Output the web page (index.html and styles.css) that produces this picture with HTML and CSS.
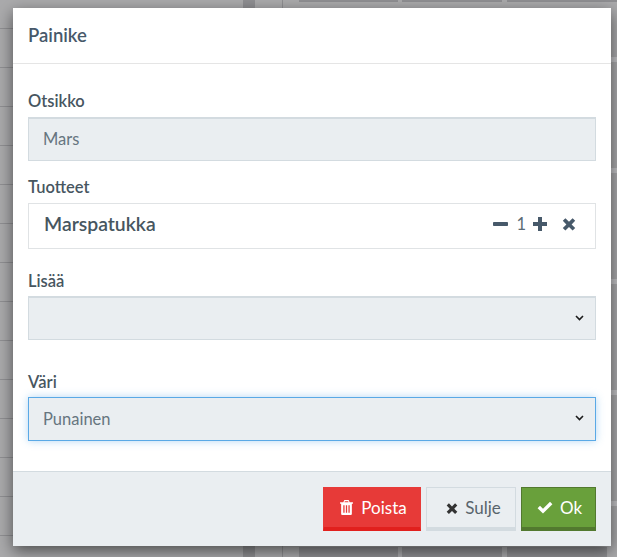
FILE: index.html
```html
<!DOCTYPE html>
<html lang="en">

<head>
    <meta charset="UTF-8">
    <meta name="viewport" content="width=device-width, initial-scale=1.0">
    <title>Painike</title>
    <link rel="stylesheet" href="styles.css">
</head>

<body>
    <div class="modal">
        <div class="modal-header">
            <h4>Painike</h4>
        </div>
        <div class="modal-body">
            <div class="field field-title">
                <label>Otsikko</label>
                <div class="control">Mars</div>
            </div>
            <div class="field field-products">
                <label>Tuotteet</label>
                <div class="product">
                    <span class="product-name">Marspatukka</span>
                    <span class="product-tools">
                        <svg class="ico ico-minus" viewBox="0 0 15 14"><rect x="0" y="5" width="15" height="4" rx="0.8"/></svg>
                        <span class="qty">1</span>
                        <svg class="ico ico-plus" viewBox="0 0 14 14"><path d="M5 0h4v5h5v4H9v5H5V9H0V5h5z"/></svg>
                        <svg class="ico ico-times" viewBox="0 0 14 14"><path d="M3.4 1.2 7 4.8l3.6-3.6 2.6 2.6L9.6 7.4l3.6 3.6-2.6 2.6L7 10l-3.6 3.6L.8 11l3.6-3.6L.8 3.8z"/></svg>
                    </span>
                </div>
            </div>
            <div class="field field-add">
                <label>Lisää</label>
                <div class="control select">
                    <span></span>
                    <svg class="chev" viewBox="0 0 9 6"><path d="M1 1l3.5 3.5L8 1" fill="none" stroke="#1c1c1c" stroke-width="1.6"/></svg>
                </div>
            </div>
            <div class="field field-color">
                <label>Väri</label>
                <div class="control select focus">
                    <span class="value">Punainen</span>
                    <svg class="chev" viewBox="0 0 9 6"><path d="M1 1l3.5 3.5L8 1" fill="none" stroke="#1c1c1c" stroke-width="1.6"/></svg>
                </div>
            </div>
        </div>
        <div class="modal-footer">
            <button class="btn btn-red">
                <svg class="ico-trash" viewBox="0 0 12 14"><path fill-rule="evenodd" d="M4 0h4l1 2h3v1.4H11V13a1 1 0 0 1-1 1H2a1 1 0 0 1-1-1V3.4H0V2h3zM4.5 1.2 4.1 2h3.8l-.4-.8zM3 5v7h1.2V5zm2.4 0v7h1.2V5zm2.4 0v7H9V5z"/></svg>
                Poista
            </button>
            <button class="btn btn-light">
                <svg class="ico-btn" viewBox="0 0 14 14"><path d="M3.4 1.6 7 5.2l3.6-3.6 2.6 2.6L9.6 7.8l3.6 3.6-2.6 2.6L7 10.4 3.4 14 .8 11.4l3.6-3.6L.8 4.2z"/></svg>
                Sulje
            </button>
            <button class="btn btn-green">
                <svg class="ico-check" viewBox="0 0 16 13"><path d="M6 12.6.6 7.2l2.4-2.4 3 3L13 .8l2.4 2.4z"/></svg>
                Ok
            </button>
        </div>
    </div>
</body>

</html>
```

FILE: styles.css
```css
* {
    margin: 0;
    padding: 0;
    box-sizing: border-box;
}

html,
body {
    height: 100%;
}

body {
    overflow: hidden;
    font-family: "Lato", sans-serif;
    color: #4a5a66;
    padding: 8px 6px 0 13px;
    background-color: #aaaaac;
    background-image:
        linear-gradient(#8f8f92, #8f8f92),
        linear-gradient(#8f8f92, #8f8f92),
        linear-gradient(#8f8f92, #8f8f92),
        linear-gradient(#8f8f92, #8f8f92),
        linear-gradient(#8f8f92, #8f8f92),
        linear-gradient(#8f8f92, #8f8f92),
        linear-gradient(#8f8f92, #8f8f92),
        linear-gradient(#8f8f92, #8f8f92),
        repeating-linear-gradient(180deg, transparent 0, transparent 28px, #909093 28px, #909093 29px, transparent 29px, transparent 39px),
        repeating-linear-gradient(180deg, transparent 0, transparent 57px, #c2c2c5 57px, #c2c2c5 62px, transparent 62px, transparent 111px);
    background-repeat: no-repeat;
    background-position: 243px 0, 282px 0, 299px 0, 402px 0, 507px 0, 299px 547px, 402px 547px, 507px 547px, 0 0, 611px 0;
    background-size: 12px 100%, 1px 100%, 99px 2px, 100px 2px, 110px 2px, 99px 10px, 100px 10px, 100px 10px, 13px 100%, 6px 100%;
}

.modal {
    height: 538px;
    width: 598px;
    background: #fff;
    box-shadow: 0 5px 15px rgba(0, 0, 0, 0.55);
    display: flex;
    flex-direction: column;
}

.modal-header {
    height: 56px;
    padding: 0 15px 2px;
    border-bottom: 1px solid #e5e5e5;
    display: flex;
    align-items: center;
}

.modal-header h4 {
    font-size: 18.5px;
    font-weight: 600;
    color: #47596a;
}

.modal-body {
    flex: 1;
    padding: 0 15px;
}

.field label {
    display: block;
    font-size: 16.5px;
    font-weight: 600;
    line-height: 20px;
    color: #47565f;
}

.field-title {
    padding-top: 27px;
}

.field-title label {
    margin-bottom: 6px;
}

.field-products {
    padding-top: 16px;
}

.field-products label {
    margin-bottom: 6px;
}

.field-add {
    padding-top: 22px;
}

.field-add label {
    margin-bottom: 5px;
}

.field-color {
    padding-top: 32px;
}

.field-color label {
    margin-bottom: 5px;
}

.control {
    height: 44px;
    padding: 0 14px 2px;
    background: #eaeef1;
    border: 2px solid #d3dbe0;
    border-width: 2px 1px 1px 1px;
    font-size: 16.5px;
    color: #66757f;
    display: flex;
    align-items: center;
    justify-content: space-between;
}

.select {
    padding-right: 11px;
}

.focus {
    border: 1px solid #5aa9e6;
    box-shadow: 0 0 8px rgba(90, 169, 230, 0.45);
}

.value {
    padding-top: 2px;
}

.chev {
    width: 9px;
    height: 6px;
}

.product {
    height: 46px;
    padding: 0 19px 4px 15px;
    border: 1px solid #e0e3e5;
    display: flex;
    align-items: center;
    justify-content: space-between;
}

.product-name {
    font-size: 19.4px;
    font-weight: 600;
    color: #47565f;
    margin-bottom: 2px;
}

.product-tools {
    display: flex;
    align-items: center;
}

.ico {
    width: 14px;
    height: 14px;
    fill: #47596a;
}

.ico-minus {
    width: 15px;
}

.qty {
    font-size: 16.5px;
    margin: 0 7px 0 8px;
    color: #5c6b75;
}

.ico-times {
    margin-left: 15px;
}

.modal-footer {
    height: 75px;
    padding: 15px 15px 0;
    background: #eaeef1;
    border-top: 1px solid #d3dbe0;
    display: flex;
    justify-content: flex-end;
    gap: 5px;
}

.btn {
    height: 44px;
    font-family: inherit;
    font-size: 17px;
    border: 1px solid;
    border-bottom-width: 4px;
    display: flex;
    align-items: center;
    justify-content: center;
    gap: 7px;
}

.btn-red {
    width: 98px;
    padding-left: 3px;
    gap: 8px;
    color: #fff;
    background: #e73a38;
    border-color: #e73a38 #e73a38 #e1201d;
}

.btn-light {
    width: 90px;
    padding-left: 5px;
    color: #59646c;
    background: #eaeef1;
    border-color: #d3dbe0;
}

.btn-green {
    width: 75px;
    padding-left: 2px;
    color: #fff;
    background: #69a03b;
    border-color: #52792f;
}

.ico-trash {
    width: 13px;
    height: 15px;
    fill: #fff;
}

.ico-btn {
    width: 12px;
    height: 14px;
    fill: #333;
}

.ico-check {
    width: 16px;
    height: 13px;
    fill: #fff;
}
```
